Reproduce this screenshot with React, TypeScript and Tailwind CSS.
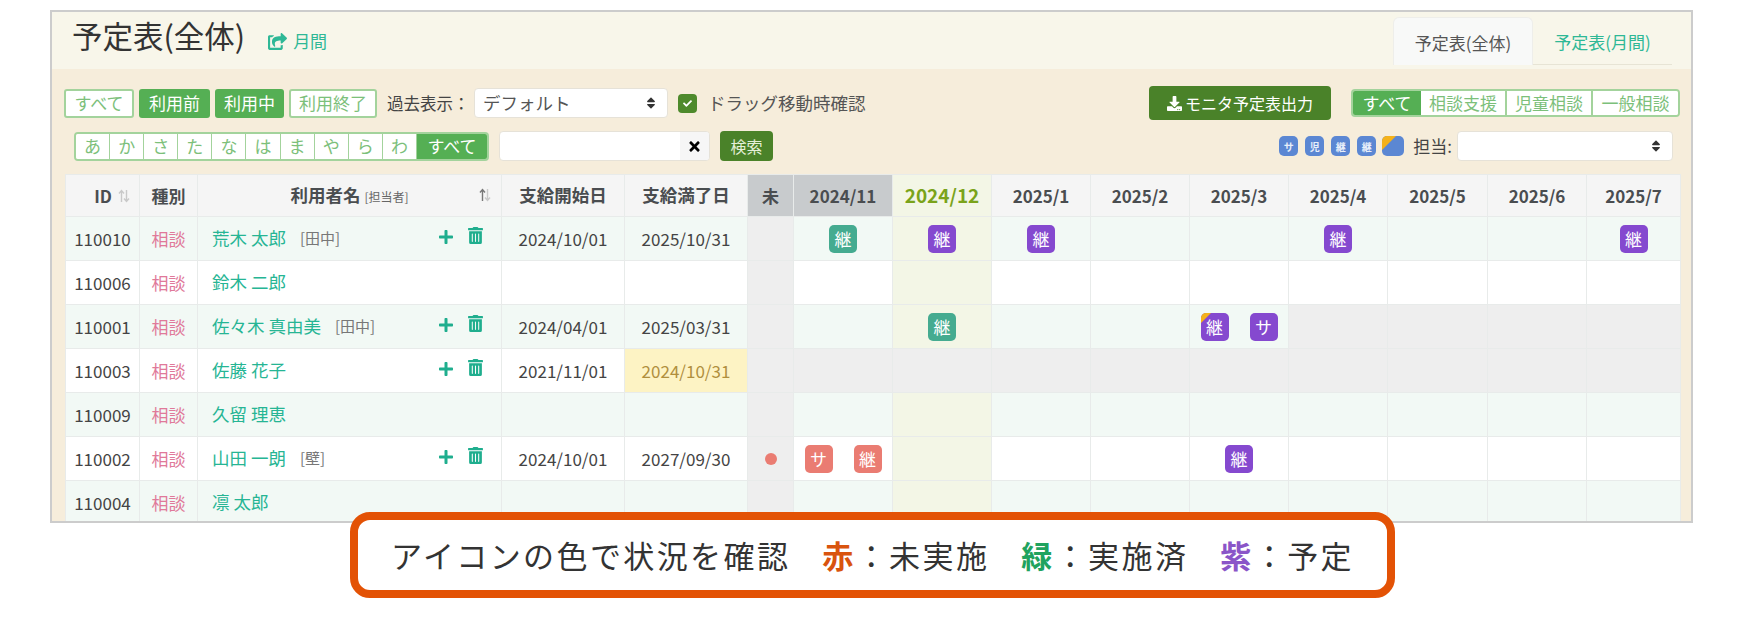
import { FaCheck, FaDownload, FaPlus, FaShareSquare, FaSort, FaTimes, FaTrashAlt } from "react-icons/fa";

type Badge = { label: string; color: "green" | "purple" | "red"; corner?: boolean };

type Row = {
  id: string;
  name: string;
  staff?: string;
  start?: string;
  end?: string;
  warn?: boolean;
  dot?: boolean;
  grayFrom?: number;
  actions?: boolean;
  badges: Record<number, Badge[]>;
};

const months = ["2024/11", "2024/12", "2025/1", "2025/2", "2025/3", "2025/4", "2025/5", "2025/6", "2025/7"];

const rows: Row[] = [
  {
    id: "110010",
    name: "荒木 太郎",
    staff: "[田中]",
    start: "2024/10/01",
    end: "2025/10/31",
    actions: true,
    badges: {
      0: [{ label: "継", color: "green" }],
      1: [{ label: "継", color: "purple" }],
      2: [{ label: "継", color: "purple" }],
      5: [{ label: "継", color: "purple" }],
      8: [{ label: "継", color: "purple" }],
    },
  },
  { id: "110006", name: "鈴木 二郎", badges: {} },
  {
    id: "110001",
    name: "佐々木 真由美",
    staff: "[田中]",
    start: "2024/04/01",
    end: "2025/03/31",
    actions: true,
    grayFrom: 5,
    badges: {
      1: [{ label: "継", color: "green" }],
      4: [
        { label: "継", color: "purple", corner: true },
        { label: "サ", color: "purple" },
      ],
    },
  },
  {
    id: "110003",
    name: "佐藤 花子",
    start: "2021/11/01",
    end: "2024/10/31",
    warn: true,
    actions: true,
    grayFrom: 0,
    badges: {},
  },
  { id: "110009", name: "久留 理恵", badges: {} },
  {
    id: "110002",
    name: "山田 一朗",
    staff: "[壁]",
    start: "2024/10/01",
    end: "2027/09/30",
    dot: true,
    actions: true,
    badges: {
      0: [
        { label: "サ", color: "red" },
        { label: "継", color: "red" },
      ],
      4: [{ label: "継", color: "purple" }],
    },
  },
  { id: "110004", name: "凛 太郎", badges: {} },
];

const badgeColors = {
  green: "bg-[#45ab90]",
  purple: "bg-[#8549cf]",
  red: "bg-[#ea7c72]",
};

function SortIcon({ active }: { active?: boolean }) {
  return (
    <svg width="12" height="14" viewBox="0 0 12 14" fill="none" strokeWidth="1.4">
      <path d="M3.5 13V2M1 4.5 3.5 1.5 6 4.5" stroke={active ? "#777" : "#c9c9c9"} />
      <path d="M8.5 1v11M6 9.500 8.500 12.500 11 9.500" stroke="#c9c9c9" />
    </svg>
  );
}

function StatusBadge({ badge }: { badge: Badge }) {
  return (
    <span
      className={`relative flex h-[28px] w-[28px] items-center justify-center overflow-hidden rounded-[5px] text-[17px] text-white ${badgeColors[badge.color]}`}
    >
      {badge.corner && (
        <span className="absolute left-0 top-0 h-0 w-0 border-r-[10px] border-t-[10px] border-r-transparent border-t-[#f5b21a]" />
      )}
      {badge.label}
    </span>
  );
}

function FilterButton({ label, active, width }: { label: string; active?: boolean; width: string }) {
  return (
    <span
      className={`flex h-[29px] items-center justify-center rounded-[3px] text-[17px] ${width} ${
        active ? "bg-[#55af54] text-white" : "border-2 border-[#a3d39c] bg-white text-[#7cc07a]"
      }`}
    >
      {label}
    </span>
  );
}

function SelectBox({ value, width }: { value?: string; width: string }) {
  return (
    <div
      className={`flex h-[30px] items-center justify-between rounded-[4px] border border-[#e6e2d8] bg-white pl-[8px] pr-[9px] text-[17.500px] text-[#555] ${width}`}
    >
      <span>{value}</span>
      <FaSort className="text-[14px] text-[#333]" />
    </div>
  );
}

const kana = ["あ", "か", "さ", "た", "な", "は", "ま", "や", "ら", "わ"];
const thClass = "border border-[#e8ebea] bg-[#f5f5f5] text-[17px] font-bold text-[#4a4d50]";
const tdClass = "border border-[#e8ebea] text-[17px] text-[#444]";

export default function App() {
  return (
    <div className="relative h-[620px] w-[1744px] overflow-hidden bg-white pl-[50px] pt-[10px] font-['Noto_Sans_CJK_JP','Liberation_Sans',sans-serif] text-[#444]">
      <div className="h-[513px] w-[1643px] overflow-hidden border-2 border-[#cccccc]">
        {/* heading */}
        <div className="flex h-[57px] items-end bg-[#f8f6ea] pb-[4px] pl-[20px] pr-[19px]">
          <h1 className="mb-[11px] text-[30.500px] leading-[38px] text-[#333]">予定表(全体)</h1>
          <a className="mb-[12px] ml-[23px] flex items-center gap-[6px] text-[17px] leading-[24px] text-[#2fb896]">
            <FaShareSquare className="text-[19px]" />
            月間
          </a>
          <div className="ml-auto flex h-[48px] items-stretch">
            <div className="flex w-[140px] items-center justify-center rounded-t-[6px] border border-b-0 border-[#eeeeea] bg-[#f8f9f8] pt-[2px] text-[17px] text-[#555]">
              予定表(全体)
            </div>
            <div className="flex w-[139px] items-center justify-center border-b border-[#e7e4d5] pt-[2px] text-[17px] text-[#2fb896]">
              予定表(月間)
            </div>
          </div>
        </div>

        {/* filters */}
        <div className="h-[105px] bg-[#f6eddb] pl-[12px] pr-[11px] pt-[19px]">
          <div className="flex h-[30px] items-center">
            <div className="flex gap-[5px]">
              <FilterButton label="すべて" width="w-[70px]" />
              <FilterButton label="利用前" active width="w-[71px]" />
              <FilterButton label="利用中" active width="w-[69px]" />
              <FilterButton label="利用終了" width="w-[88px]" />
            </div>
            <span className="ml-[10px] mr-[4px] w-[83px] whitespace-nowrap text-[16.500px]">過去表示：</span>
            <SelectBox value="デフォルト" width="w-[194px]" />
            <span className="ml-[10px] flex h-[19px] w-[19px] items-center justify-center rounded-[4px] bg-[#4e8a2c] text-[9px] text-white">
              <FaCheck />
            </span>
            <span className="ml-[11px] whitespace-nowrap text-[17.500px] text-[#555]">ドラッグ移動時確認</span>
            <button className="ml-auto flex h-[34px] w-[182px] items-center justify-center gap-[3px] rounded-[4px] bg-[#4a8229] text-[16px] text-white">
              <FaDownload className="text-[15px]" />
              モニタ予定表出力
            </button>
            <div className="ml-[20px] flex h-[28px] w-[329px] overflow-hidden rounded-[4px] border-2 border-[#a3d39c] text-[17px] text-[#7cc07a]">
              <span className="flex w-[68px] items-center justify-center bg-[#55af54] text-white">すべて</span>
              <span className="flex w-[86px] items-center justify-center border-r-2 border-[#a3d39c] bg-white">相談支援</span>
              <span className="flex w-[86px] items-center justify-center border-r-2 border-[#a3d39c] bg-white">児童相談</span>
              <span className="flex flex-1 items-center justify-center bg-white">一般相談</span>
            </div>
          </div>

          <div className="mt-[13px] flex h-[30px] items-center">
            <div className="ml-[10px] flex h-[29px] w-[415px] overflow-hidden rounded-[4px] border-2 border-[#a3d39c] text-[17px] text-[#7cc07a]">
              {kana.map((k) => (
                <span key={k} className="flex w-[34.100px] items-center justify-center border-r border-[#a3d39c] bg-white">
                  {k}
                </span>
              ))}
              <span className="flex flex-1 items-center justify-center bg-[#55af54] text-white">すべて</span>
            </div>
            <div className="ml-[10px] flex h-[30px] w-[211px] overflow-hidden rounded-[4px] border border-[#e6e2d8] bg-white">
              <div className="flex-1" />
              <span className="flex w-[29px] items-center justify-center bg-[#f6f6f6] text-[15px] text-black">
                <FaTimes />
              </span>
            </div>
            <button className="ml-[10px] flex h-[30px] w-[53px] items-center justify-center rounded-[4px] bg-[#4a8229] text-[16px] text-[#e4efd8]">
              検索
            </button>
            <div className="ml-auto flex items-center gap-[7px]">
              {["サ", "児", "継", "継"].map((label, i) => (
                <span
                  key={i}
                  className="flex h-[20px] w-[19px] items-center justify-center rounded-[5px] bg-[#5b87d3] text-[10px] font-bold text-[#e8effa]"
                >
                  {label}
                </span>
              ))}
              <span className="relative -ml-[1px] h-[20px] w-[22px] overflow-hidden rounded-[5px] bg-[#5b87d3]">
                <span className="absolute left-0 top-0 h-0 w-0 border-r-[14px] border-t-[14px] border-r-transparent border-t-[#f5b21a]" />
              </span>
            </div>
            <span className="ml-[9px] whitespace-nowrap text-[17px]">担当:</span>
            <SelectBox width="ml-[5px] w-[216px]" />
            <div className="w-[7px]" />
          </div>
        </div>

        {/* table */}
        <div className="bg-[#f6eddb] pl-[13px] pr-[11px]">
          <table className="w-[1615px] table-fixed border-collapse bg-white text-center">
            <colgroup>
              <col className="w-[74px]" />
              <col className="w-[58px]" />
              <col className="w-[304px]" />
              <col className="w-[123px]" />
              <col className="w-[123px]" />
              <col className="w-[46px]" />
              <col className="w-[99px]" />
              <col className="w-[99px]" />
              <col className="w-[99px]" />
              <col className="w-[99px]" />
              <col className="w-[99px]" />
              <col className="w-[99px]" />
              <col className="w-[100px]" />
              <col className="w-[99px]" />
              <col className="w-[94px]" />
            </colgroup>
            <thead>
              <tr className="h-[42px]">
                <th className={thClass}>
                  <div className="flex items-center justify-end gap-[6px] pr-[9px]">
                    ID
                    <SortIcon />
                  </div>
                </th>
                <th className={thClass}>種別</th>
                <th className={`${thClass} relative`}>
                  <span className="text-[17.500px]">利用者名</span>
                  <span className="ml-[4px] text-[12px] font-normal text-[#666]">[担当者]</span>
                  <span className="absolute right-[10px] top-[13px]">
                    <SortIcon active />
                  </span>
                </th>
                <th className={thClass}>
                  <span className="text-[17.500px]">支給開始日</span>
                </th>
                <th className={thClass}>
                  <span className="text-[17.500px]">支給満了日</span>
                </th>
                <th className="border border-[#e8ebea] bg-[#c8cbcd] text-[17px] font-bold text-[#4a4d50]">未</th>
                {months.map((m, i) => (
                  <th
                    key={m}
                    className={
                      i === 0
                        ? "border border-[#e8ebea] bg-[#c8cbcd] text-[17px] font-bold text-[#4a4d50]"
                        : i === 1
                          ? "border border-[#e8ebea] bg-[#f3f6e6] text-[19px] font-bold text-[#7aa31a]"
                          : thClass
                    }
                  >
                    {m}
                  </th>
                ))}
              </tr>
            </thead>
            <tbody>
              {rows.map((row, r) => {
                const stripe = r % 2 === 0;
                const rowBg = stripe ? "bg-[#f2f9f5]" : "bg-white";
                return (
                  <tr key={row.id} className={`h-[44px] ${rowBg}`}>
                    <td className={tdClass}>{row.id}</td>
                    <td className={`${tdClass} text-[#e0799a]`}>相談</td>
                    <td className={`${tdClass} pl-[14px] pr-[17px]`}>
                      <div className="flex items-center text-left">
                        <span className="text-[17.500px] text-[#26b594]">{row.name}</span>
                        {row.staff && <span className="ml-[14px] text-[15px] text-[#777]">{row.staff}</span>}
                        {row.actions && (
                          <span className="ml-auto -mt-[6px] flex items-center gap-[13px] text-[#1fae8e]">
                            <FaPlus className="mt-[2px] text-[16px]" />
                            <FaTrashAlt className="text-[17px]" />
                          </span>
                        )}
                      </div>
                    </td>
                    <td className={tdClass}>{row.start}</td>
                    <td className={`${tdClass} ${row.warn ? "bg-[#fdf3c4] text-[#b08f3e]" : ""}`}>{row.end}</td>
                    <td className="border border-[#e8ebea] bg-[#eeeeee]">
                      {row.dot && <span className="mx-auto block h-[12px] w-[12px] rounded-full bg-[#ea7c72]" />}
                    </td>
                    {months.map((m, i) => {
                      const gray = row.grayFrom !== undefined && i >= row.grayFrom;
                      const bg = gray ? "bg-[#eeeeee]" : i === 1 ? "bg-[#f3f6e6]" : "";
                      return (
                        <td key={m} className={`border border-[#e8ebea] ${bg}`}>
                          <div className="flex items-center justify-center gap-[21px]">
                            {(row.badges[i] || []).map((b, k) => (
                              <StatusBadge key={k} badge={b} />
                            ))}
                          </div>
                        </td>
                      );
                    })}
                  </tr>
                );
              })}
            </tbody>
          </table>
        </div>
      </div>

      {/* legend callout over the table */}
      <div className="absolute left-[350px] top-[512px] flex h-[86px] w-[1045px] items-center justify-center rounded-[20px] border-[8px] border-[#e35205] bg-white text-[31px] tracking-[2.400px] text-[#333]">
        <span>アイコンの色で状況を確認</span>
        <span className="ml-[32px] font-bold text-[#d9540e]">赤</span>
        <span>：未実施</span>
        <span className="ml-[32px] font-bold text-[#1fa35f]">緑</span>
        <span>：実施済</span>
        <span className="ml-[32px] font-bold text-[#8a55c8]">紫</span>
        <span>：予定</span>
      </div>
    </div>
  );
}
